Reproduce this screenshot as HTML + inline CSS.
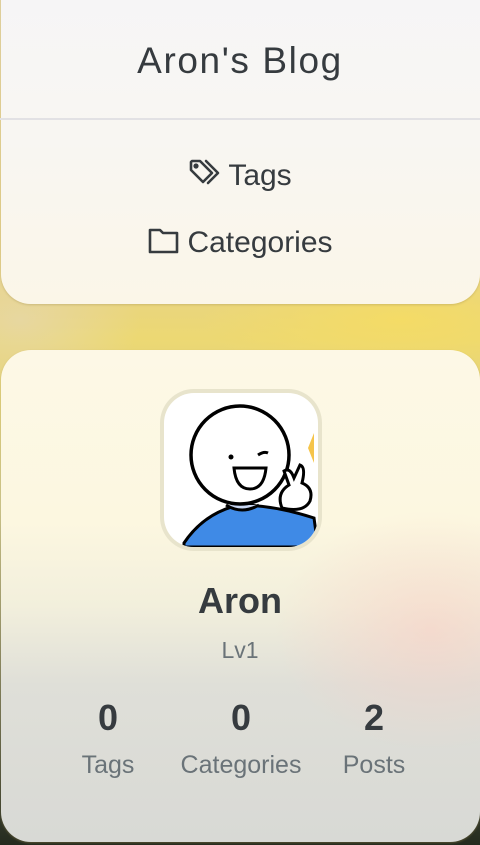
<!DOCTYPE html>
<html><head><meta charset="utf-8"><style>
html,body{margin:0;padding:0;width:480px;height:845px;overflow:hidden;font-family:"Liberation Sans",sans-serif;color:#363b3f}
body{background:linear-gradient(180deg,#e8d9a8 0%,#e6d28c 30%,#ecd873 40%,#cfc990 60%,#6b6c50 85%,#242a1e 100%);position:relative}
.bg{position:absolute;inset:0;background:radial-gradient(ellipse 120px 80px at 20px 320px,rgba(230,215,170,.8),transparent),radial-gradient(ellipse 200px 60px at 400px 320px,rgba(245,220,100,.9),transparent)}
.card{position:absolute;left:1px;width:479px;border-radius:30px;box-shadow:0 1px 2px rgba(160,140,80,.4)}
.c1{top:-30px;height:334px;background:linear-gradient(180deg,#f6f5f7 0%,#f8f6f2 50%,#fbf6e8 100%)}
.c2{top:350px;height:492px;background:linear-gradient(180deg,#fdf8e6 0%,#fcf7e0 35%,#f2efdc 52%,#dfdfd8 68%,#d8d9d5 100%);overflow:hidden}
.pink{position:absolute;left:260px;top:150px;width:340px;height:260px;background:radial-gradient(ellipse at center,rgba(250,205,195,.55),transparent 65%)}
.title{position:absolute;top:40px;width:100%;text-align:center;font-size:37px;letter-spacing:1.6px}
.hr{position:absolute;top:118px;left:0;width:480px;height:2px;background:#e2e1e4}
.item{position:absolute;width:100%;text-align:center;font-size:30px}
.stat{position:absolute;text-align:center;width:140px}
.stat .n{font-size:36px;color:#363b3f;font-weight:bold}
.stat .l{font-size:25px;color:#6a7378;margin-top:12px}
</style></head><body>
<div class="bg"></div>
<div class="card c1"></div>
<div class="title">Aron's Blog</div>
<div class="hr"></div>
<div class="item" style="top:158px;"><svg width="34" height="30" viewBox="0 0 34 30" style="vertical-align:-3px;margin-right:6px" fill="none" stroke="#363b3f" stroke-width="2.6" stroke-linejoin="round" stroke-linecap="round"><path d="M3 4 L3 12 L15 24 L24 15 L12 3 L4 3 Z"/><circle cx="8" cy="8" r="1.3" fill="#363b3f"/><path d="M18 3 L30 15 L20 25"/></svg>Tags</div>
<div class="item" style="top:225px;"><svg width="34" height="30" viewBox="0 0 34 30" style="vertical-align:-3px;margin-right:6px" fill="none" stroke="#363b3f" stroke-width="2.6" stroke-linejoin="round"><path d="M3 5 L13 5 L16 8 L30 8 L30 27 L3 27 Z"/></svg>Categories</div>
<div class="card c2"><div class="pink"></div></div>
<div style="position:absolute;left:160px;top:389px;width:162px;height:162px;border-radius:34px;background:#e8e4cc;"></div>
<div style="position:absolute;left:164px;top:393px;width:154px;height:154px;border-radius:30px;background:#fff;overflow:hidden">
<svg width="154" height="154" viewBox="0 0 154 154">
<path d="M20 150 Q40 120 75 112 Q110 112 150 125 L154 154 L20 154 Z" fill="#3f8ae6" stroke="#000" stroke-width="3"/>
<path d="M62 112 Q78 122 95 112" fill="#c9d7f3" stroke="#000" stroke-width="3"/>
<circle cx="76" cy="62" r="49" fill="#fff" stroke="#000" stroke-width="3.5"/>
<circle cx="67" cy="64" r="2.5" fill="#000"/>
<path d="M94 62 Q100 58 104 60" stroke="#000" stroke-width="3" fill="none"/>
<path d="M70 75 Q72 96 86 96 Q100 96 102 75 Z" fill="#fff" stroke="#000" stroke-width="3"/>
<path d="M150 40 L144 55 L150 70" fill="#f5c44a"/>
<path d="M118 115 Q112 100 125 92 L120 78 Q126 74 130 85 L136 72 Q142 74 138 90 Q150 95 146 108 Q140 120 118 115 Z" fill="#fff" stroke="#000" stroke-width="3"/>
</svg></div>
<div style="position:absolute;top:580px;width:100%;text-align:center;font-size:36px;font-weight:bold">Aron</div>
<div style="position:absolute;top:637px;width:100%;text-align:center;font-size:23px;color:#6a7378">Lv1</div>
<div class="stat" style="left:38px;top:697px"><div class="n">0</div><div class="l">Tags</div></div>
<div class="stat" style="left:171px;top:697px"><div class="n">0</div><div class="l">Categories</div></div>
<div class="stat" style="left:304px;top:697px"><div class="n">2</div><div class="l">Posts</div></div>
</body></html>
